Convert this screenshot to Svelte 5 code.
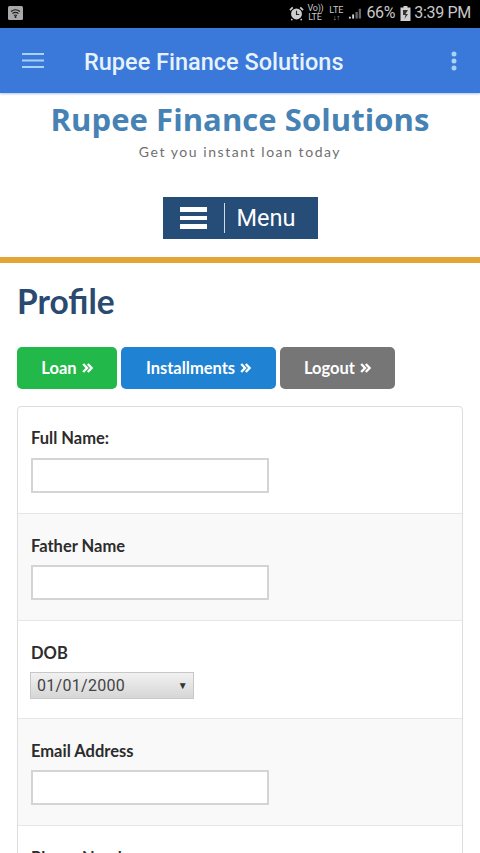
<script>
	const actions = [
		{ label: 'Loan', tone: 'green' },
		{ label: 'Installments', tone: 'blue' },
		{ label: 'Logout', tone: 'grey' }
	];
</script>

<div class="page">
	<div class="status">
		<svg class="wifi" width="15" height="14" viewBox="0 0 15 14">
			<rect width="15" height="14" rx="1.5" fill="#a9a9a9" />
			<path d="M3 5.500q4.500-3.500 9 0M4.500 7.500q3-2.300 6 0M6 9.500q1.500-1 3 0" fill="none" stroke="#1c1c1c" stroke-width="1.200" />
			<circle cx="7.500" cy="11" r="1" fill="#1c1c1c" />
		</svg>
		<div class="status-right">
			<svg class="alarm" width="15" height="15" viewBox="0 0 16 15">
				<circle cx="8" cy="8" r="5.800" fill="#cfcfcf" />
				<path d="M8 4.500V8.500H11" fill="none" stroke="#222" stroke-width="1.200" />
				<path d="M1 4 4 1M15 4 12 1M3.500 13.500 2.500 14.500M12.500 13.500 13.500 14.500" stroke="#cfcfcf" stroke-width="1.800" />
			</svg>
			<span class="net">Vo))<br />LTE</span>
			<span class="net lte">LTE<br /><b>↓↑</b></span>
			<svg class="signal" width="14" height="14" viewBox="0 0 15 14">
				<rect x="1" y="11" width="2" height="2" fill="#d5d5d5" />
				<rect x="4.500" y="8.500" width="2" height="4.500" fill="#d5d5d5" />
				<path d="M8 6h2.500v7H8zM11.500 2.500H14V13h-2.500z" fill="#666" />
			</svg>
			<span class="pct">66%</span>
			<svg class="battery" width="11" height="15" viewBox="0 0 11 15">
				<path d="M3.500 0h4v1.500H10.500V15H.5V1.500h3z" fill="#cfcfcf" />
				<path d="M3 4h5L5.500 8H8l-3.500 5 1-4H3z" fill="#333" />
			</svg>
			<span class="time">3:39 PM</span>
		</div>
	</div>

	<div class="appbar">
		<svg class="burger" width="24" height="17" viewBox="0 0 24 17">
			<path d="M1 2H23M1 8.500H23M1 15H23" stroke="#a9d2f7" stroke-width="2.200" />
		</svg>
		<span class="appbar-title">Rupee Finance Solutions</span>
		<svg class="dots" width="6" height="20" viewBox="0 0 6 20">
			<circle cx="3" cy="3" r="2.500" fill="#a9d2f7" />
			<circle cx="3" cy="10" r="2.500" fill="#a9d2f7" />
			<circle cx="3" cy="17" r="2.500" fill="#a9d2f7" />
		</svg>
	</div>

	<header class="brand">
		<h2>Rupee Finance Solutions</h2>
		<p>Get you instant loan today</p>
		<button class="menu">
			<span class="menu-icon"><i></i><i></i><i></i></span>
			<span class="menu-label">Menu</span>
		</button>
	</header>

	<main>
		<h1>Profile</h1>

		<div class="actions">
			{#each actions as action}
				<button class="action {action.tone}">
					{action.label}
					<svg width="11" height="10" viewBox="0 0 11 10">
						<path d="M1.200 1 5 5 1.200 9M5.800 1 9.600 5 5.800 9" fill="none" stroke="currentColor" stroke-width="2.400" />
					</svg>
				</button>
			{/each}
		</div>

		<div class="panel">
			<div class="row first">
				<label for="full">Full Name:</label>
				<input id="full" type="text" />
			</div>
			<div class="row alt">
				<label for="father">Father Name</label>
				<input id="father" type="text" />
			</div>
			<div class="row dob">
				<label for="dob">DOB</label>
				<div id="dob" class="select">
					<span>01/01/2000</span>
					<span class="arrow">▼</span>
				</div>
			</div>
			<div class="row alt">
				<label for="email">Email Address</label>
				<input id="email" type="text" />
			</div>
			<div class="row">
				<label for="phone">Phone Number:</label>
				<input id="phone" type="text" />
			</div>
		</div>
	</main>
</div>

<style>
	:global(body) {
		background: #fff;
		overflow: hidden;
	}

	.page {
		width: 480px;
		height: 853px;
		overflow: hidden;
		font-family: Lato, sans-serif;
		background: #fff;
	}

	.status {
		height: 28px;
		background: #000;
		color: #c8c8c8;
		display: flex;
		align-items: center;
		justify-content: space-between;
		padding: 0 9px 2px 8px;
		box-sizing: border-box;
		font-family: Roboto, sans-serif;
	}

	.status-right {
		display: flex;
		align-items: center;
	}

	.net {
		font-size: 9px;
		line-height: 9px;
		text-align: center;
		width: 15px;
		margin-left: 3px;
		letter-spacing: -0.2px;
	}

	.lte {
		width: 16px;
		margin-left: 6px;
		letter-spacing: 0;
	}

	.lte b {
		display: block;
		font-size: 7px;
		line-height: 6px;
	}

	.signal {
		margin-left: 4px;
	}

	.pct,
	.time {
		font-size: 16px;
		line-height: 20px;
		letter-spacing: -0.3px;
	}

	.pct {
		margin-left: 4px;
	}

	.battery {
		margin-left: 5px;
	}

	.time {
		margin-left: 3px;
	}

	.appbar {
		height: 65px;
		background: #3a78d9;
		display: flex;
		align-items: center;
		padding: 0 23px 0 21px;
		box-shadow: 0 1px 2px rgba(60, 110, 200, 0.4);
		position: relative;
	}

	.appbar-title {
		margin-left: 39px;
		flex: 1;
		padding-top: 2px;
		font-family: Roboto, sans-serif;
		font-weight: 500;
		font-size: 23.500px;
		color: #e6f3fd;
	}

	.brand {
		display: flex;
		flex-direction: column;
		align-items: center;
		height: 170px;
		box-sizing: border-box;
		padding-top: 5px;
		border-bottom: 6px solid #e3a534;
	}

	.brand h2 {
		margin: 0;
		font-family: 'Open Sans', sans-serif;
		font-weight: 700;
		font-size: 31px;
		line-height: 42px;
		letter-spacing: 0.070px;
		color: #4682b4;
	}

	.brand p {
		margin: 3px 0 0;
		font-size: 14px;
		line-height: 18px;
		letter-spacing: 1.550px;
		color: #6f6f6f;
	}

	.menu {
		margin-top: 36px;
		width: 155px;
		height: 42px;
		background: #264d78;
		border: 0;
		padding: 0 0 0 17px;
		display: flex;
		align-items: center;
		color: #fff;
		font-family: Roboto, sans-serif;
	}

	.menu-icon {
		display: flex;
		flex-direction: column;
		gap: 4px;
		width: 27px;
		padding-right: 17px;
		border-right: 1px solid #cfdbe8;
		height: 30px;
		justify-content: center;
		box-sizing: content-box;
	}

	.menu-icon i {
		display: block;
		height: 4.500px;
		background: #fff;
	}

	.menu-label {
		margin-left: 12px;
		font-size: 23.500px;
	}

	main {
		padding: 0 17px;
	}

	h1 {
		margin: 18px 0 0;
		font-size: 33.500px;
		line-height: 40px;
		font-weight: 700;
		color: #2b4a6f;
	}

	.actions {
		display: flex;
		gap: 4px;
		margin-top: 26px;
	}

	.action {
		height: 42px;
		border: 0;
		border-radius: 5px;
		color: #fff;
		font-family: Lato, sans-serif;
		font-weight: 700;
		font-size: 16.500px;
		padding: 0;
		display: flex;
		align-items: center;
		justify-content: center;
		gap: 5px;
	}

	.green {
		background: #22b84a;
		width: 100px;
	}

	.blue {
		background: #1f82d2;
		width: 155px;
	}

	.grey {
		background: #767676;
		width: 115px;
	}

	.panel {
		margin-top: 17px;
		width: 446px;
		box-sizing: border-box;
		border: 1px solid #ddd;
		border-radius: 4px;
		background: #fff;
	}

	.row {
		height: 107px;
		box-sizing: border-box;
		padding: 21px 13px 0;
		border-bottom: 1px solid #e6e6e6;
	}

	.first {
		padding-top: 20px;
	}

	.first input {
		margin-top: 9px;
	}

	.alt {
		background: #f9f9f9;
	}

	.dob {
		height: 98px;
	}

	label {
		display: block;
		font-weight: 700;
		font-size: 16.500px;
		line-height: 22px;
		color: #2c2c2c;
	}

	input {
		display: block;
		margin-top: 8px;
		width: 238px;
		height: 35px;
		box-sizing: border-box;
		border: 2px solid #d4d4d4;
		background: #fff;
		padding: 0;
	}

	.select {
		margin: 8px 0 0 -1px;
		width: 164px;
		height: 27px;
		box-sizing: border-box;
		border: 1px solid #c8c8c8;
		background: linear-gradient(#f1f1f1, #d6d6d6);
		display: flex;
		align-items: center;
		justify-content: space-between;
		padding: 0 5px 0 6px;
		font-family: Roboto, sans-serif;
		font-size: 16px;
		letter-spacing: 0.3px;
		color: #444;
	}

	.arrow {
		font-size: 10px;
		color: #333;
	}
</style>
